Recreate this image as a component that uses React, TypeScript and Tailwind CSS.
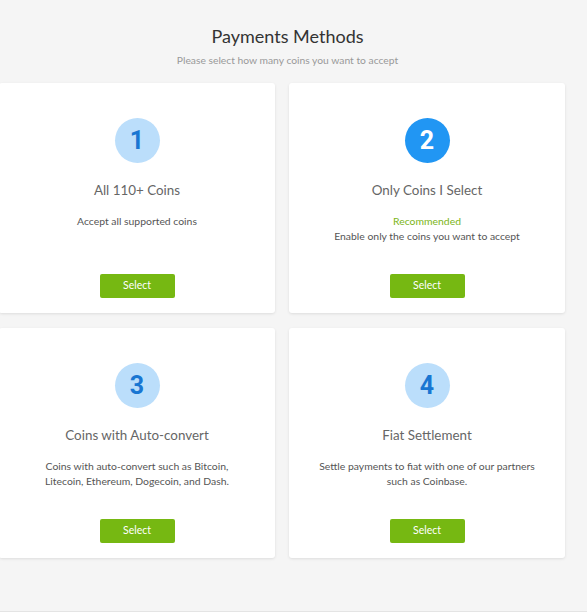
import React from 'react'

type Method = {
  num: string
  title: string
  lines: string[]
  recommended?: boolean
  active?: boolean
}

const methods: Method[] = [
  { num: '1', title: 'All 110+ Coins', lines: ['Accept all supported coins'] },
  {
    num: '2',
    title: 'Only Coins I Select',
    lines: ['Enable only the coins you want to accept'],
    recommended: true,
    active: true,
  },
  {
    num: '3',
    title: 'Coins with Auto-convert',
    lines: ['Coins with auto-convert such as Bitcoin,', 'Litecoin, Ethereum, Dogecoin, and Dash.'],
  },
  {
    num: '4',
    title: 'Fiat Settlement',
    lines: ['Settle payments to fiat with one of our partners', 'such as Coinbase.'],
  },
]

function MethodCard({ method }: { method: Method }) {
  return (
    <div className="flex h-[230px] flex-col items-center rounded-[3px] bg-white pt-[35px] pb-[15px] text-center shadow-[0_1px_3px_rgba(0,0,0,0.1)]">
      {/* Number badge */}
      <div
        className={
          method.active
            ? 'flex h-[45px] w-[45px] items-center justify-center rounded-full bg-[#2196f3] text-white'
            : 'flex h-[45px] w-[45px] items-center justify-center rounded-full bg-[#bbdefb] text-[#1976d2]'
        }
        style={{ fontFamily: 'Roboto, sans-serif' }}
      >
        <span className="text-[25px] font-bold leading-none">{method.num}</span>
      </div>

      <h3 className="mt-[17px] text-[13.4px] leading-[20px] text-[#666]">{method.title}</h3>

      <div className="mt-[14px] text-[10.4px] leading-[14.5px] text-[#555]">
        {method.recommended && <p className="text-[#7cb518]">Recommended</p>}
        {method.lines.map((line) => (
          <p key={line}>{line}</p>
        ))}
      </div>

      <button className="mt-auto h-[24px] w-[75px] rounded-[2px] bg-[#76b812] text-[10.5px] text-white">
        Select
      </button>
    </div>
  )
}

export default function App() {
  return (
    <div
      className="min-h-[612px] border-b border-[#e4e4e4] bg-[#f5f5f5] pb-[51px]"
      style={{ fontFamily: 'Lato, "Open Sans", sans-serif' }}
    >
      {/* Header */}
      <div className="pt-[24px] pr-[12px] text-center">
        <h1 className="text-[18px] leading-[24px] text-[#333]">Payments Methods</h1>
        <p className="mt-[5px] text-[10.3px] leading-[14px] text-[#999]">
          Please select how many coins you want to accept
        </p>
      </div>

      {/* Cards */}
      <div className="mt-[16px] ml-[-1px] grid w-[566px] grid-cols-2 gap-x-[14px] gap-y-[15px]">
        {methods.map((m) => (
          <MethodCard key={m.num} method={m} />
        ))}
      </div>
    </div>
  )
}
